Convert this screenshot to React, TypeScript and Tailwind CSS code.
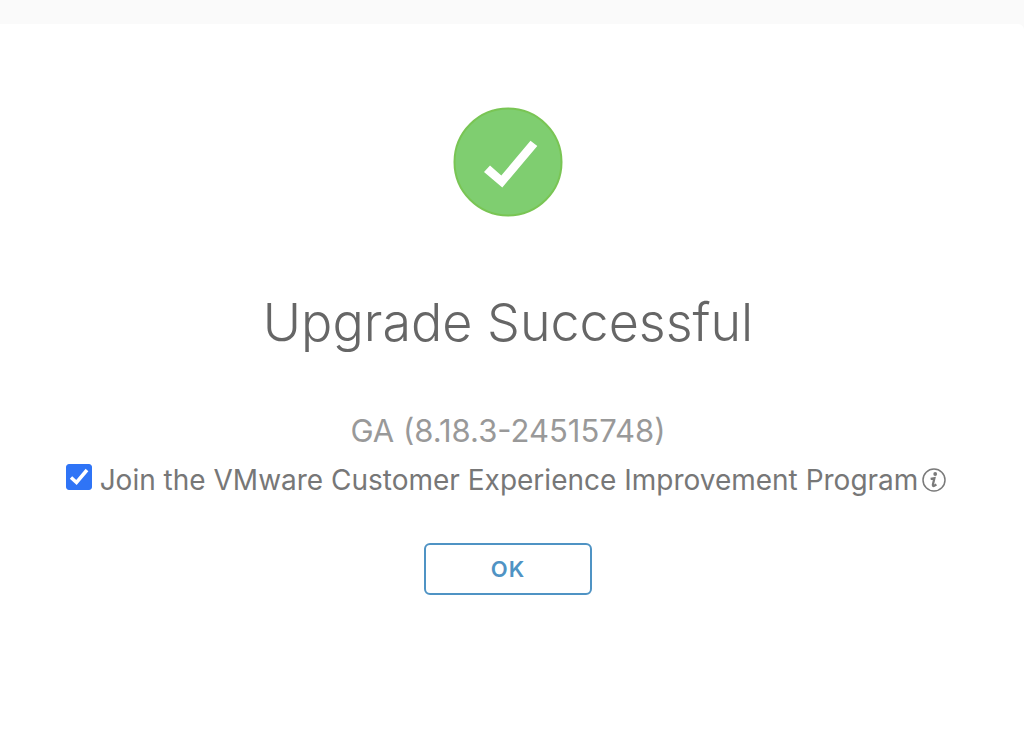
import {useState} from "react";

const CheckBadge = () => (
    <svg viewBox="0 0 110 110" className="w-[110px] h-[110px]" aria-hidden="true">
        <circle cx="55" cy="55" r="53.5" fill="#7fce70" stroke="#79c554" strokeWidth="2"/>
        <path d="M31 65 L37 58.5 L48.3 68.5 L77.5 33.7 L84.3 39 L49.3 80.5 Z" fill="#fff"/>
    </svg>
);

const InfoIcon = () => (
    <svg viewBox="0 0 24 24" className="w-6 h-6" fill="none" stroke="#7a7a7a" aria-hidden="true">
        <circle cx="12" cy="12" r="11" strokeWidth="1.5"/>
        <circle cx="13.2" cy="6" r="1.9" fill="#7a7a7a" stroke="none"/>
        <path d="M8.6 10.8 L12.4 10.2 L10.9 16.6 Q10.7 18.5 12.3 17.8 L14.4 16.6" strokeWidth="2.3"/>
    </svg>
);

const App = () => {
    const [joined, setJoined] = useState(true);

    return (
        <div className="min-h-screen bg-[#fafafa] pt-6 font-['Inter',sans-serif]">
            <main className="min-h-[calc(100vh-24px)] bg-white rounded-tr-md flex flex-col items-center pt-[83px] pr-2">
                <CheckBadge/>
                <h1 className="mt-[74px] text-[52px] leading-[64px] font-light text-[#666]">
                    Upgrade Successful
                </h1>
                <p className="mt-[56px] text-[31px] leading-10 text-[#999]">
                    GA (8.18.3-24515748)
                </p>

                {/* opt-in */}
                <div className="mt-2 pr-1 flex items-center">
                    <label className="flex items-center text-[28px] leading-[42px] text-[#777]">
                        <span className="relative mr-2 mb-1.5 flex">
                            <input
                                type="checkbox"
                                checked={joined}
                                onChange={(e) => setJoined(e.target.checked)}
                                className="peer appearance-none w-[26px] h-[26px] rounded-[3px] border border-[#767676] checked:border-[#2f74f6] checked:bg-[#2f74f6]"
                            />
                            <svg
                                viewBox="0 0 26 26"
                                className="absolute inset-0 hidden pointer-events-none peer-checked:block"
                                fill="none"
                                stroke="#fff"
                                strokeWidth="3.5"
                            >
                                <path d="M5 13.5 L10.5 18.5 L21 6"/>
                            </svg>
                        </span>
                        Join the VMware Customer Experience Improvement Program
                    </label>
                    <button type="button" aria-label="More information" className="ml-1">
                        <InfoIcon/>
                    </button>
                </div>

                <button
                    type="button"
                    className="mt-[42px] w-[168px] h-[52px] rounded-[6px] border-2 border-[#4f93c4] text-[22px] font-semibold tracking-wider text-[#4f93c4]"
                >
                    OK
                </button>
            </main>
        </div>
    );
};

export default App;
